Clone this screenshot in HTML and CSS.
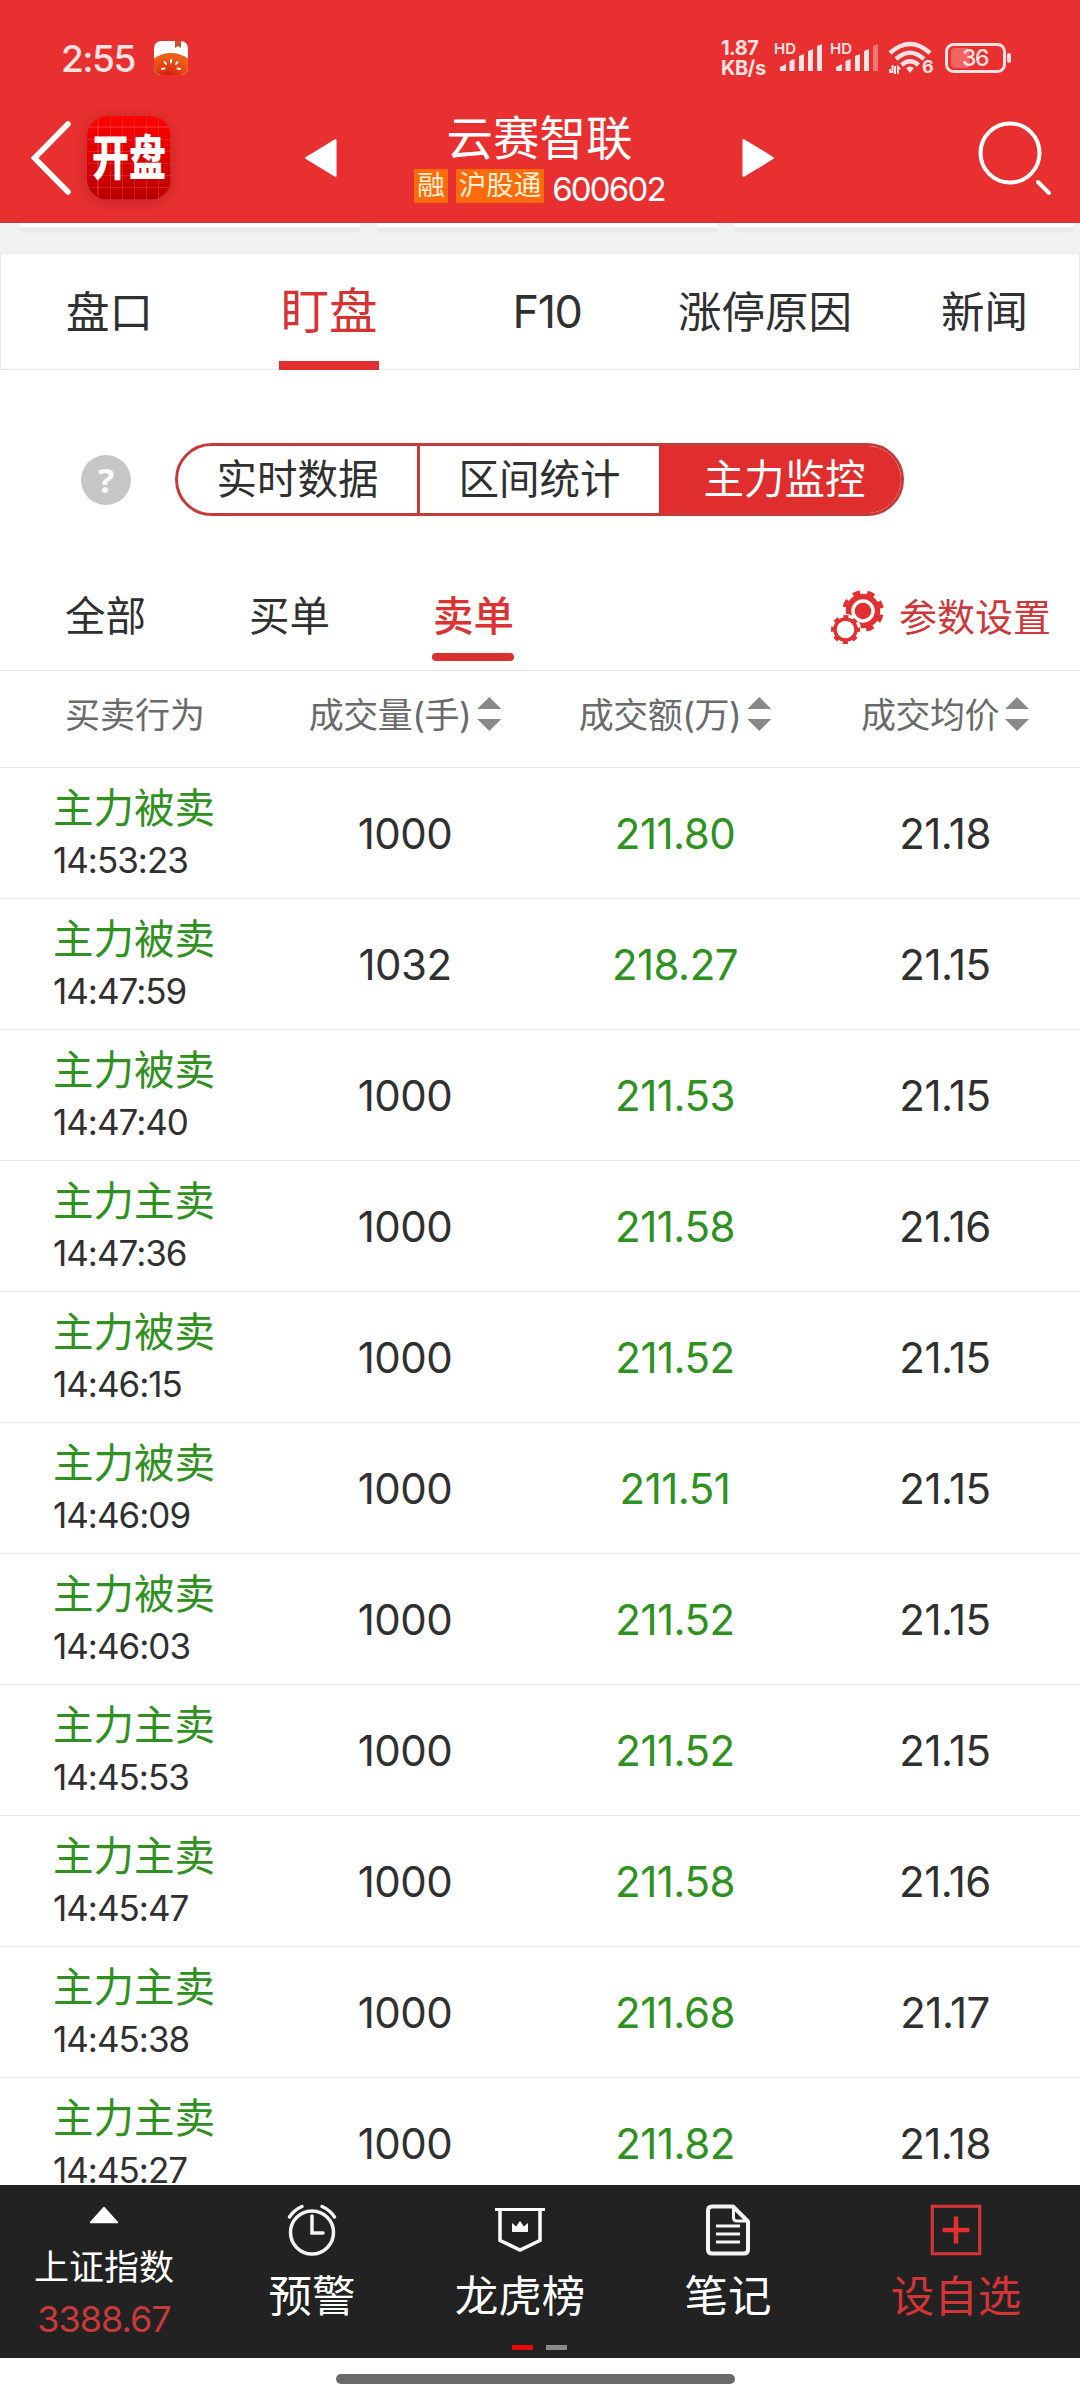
FILE: index.html
```html
<!DOCTYPE html>
<html lang="zh">
<head>
  <meta charset="UTF-8">
  <title>云赛智联 600602</title>
  <link rel="stylesheet" href="styles.css">
</head>
<body>
  <header>
    <div class="status-bar">
      <span class="time">2:55</span>
      <svg class="tomato" width="34" height="34" viewBox="0 0 34 34">
        <defs>
          <clipPath id="tomatoClip"><rect width="34" height="34" rx="7"/></clipPath>
          <radialGradient id="tomatoFill" cx="0.45" cy="0.6" r="0.5">
            <stop offset="0" stop-color="#d21a08"/>
            <stop offset="1" stop-color="#ee5f1c"/>
          </radialGradient>
        </defs>
        <g clip-path="url(#tomatoClip)">
          <rect width="34" height="34" fill="#fff"/>
          <path d="M21 0h6v7l-3-2-3 2z" fill="#c9532c"/>
          <ellipse cx="17" cy="31" rx="24" ry="19" fill="url(#tomatoFill)"/>
          <path d="M17 19v2.500M10.500 21l1.500 2M23.500 21l-1.500 2M8 28l2.500-.5M26 28l-2.500-.5" stroke="#fff" stroke-width="2" stroke-linecap="round"/>
        </g>
      </svg>
      <div class="net-speed"><span>1.87</span><span>KB/s</span></div>
      <svg class="signal" width="48" height="34" viewBox="0 0 48 34">
        <text x="-1" y="13">HD</text>
        <path d="M5 30v-4l6-3v7zM14.500 30V20l5-2v12zM24 30V15l5-2v17zM33 30V10l5-2v22zM42 30V5l5-2v27z"/>
      </svg>
      <svg class="signal second" width="48" height="34" viewBox="0 0 48 34">
        <text x="-1" y="13">HD</text>
        <path d="M5 30v-4l6-3v7zM14.500 30V20l5-2v12zM24 30V15l5-2v17zM33 30V10l5-2v22z"/>
        <path d="M42 30V5l5-2v27z" opacity="0.4"/>
      </svg>
      <svg class="wifi" width="46" height="36" viewBox="0 0 46 36">
        <g fill="none" stroke="#ffe3e3" stroke-width="4.500">
          <path d="M2 13Q22 -5 42 13"/>
          <path d="M8 19Q22 6.500 36 19"/>
          <path d="M13.500 25Q22 17.500 30.500 25"/>
        </g>
        <path d="M18 28q4-3 8 0l-4 5z" fill="#ffe3e3"/>
        <path d="M2 29v3h2.500v-7M7 34v-8M10 34v-7l2 2" fill="none" stroke="#ffe3e3" stroke-width="2"/>
        <text x="34" y="33">6</text>
      </svg>
      <svg class="battery" width="68" height="30" viewBox="0 0 68 30">
        <rect x="1.500" y="1.500" width="58" height="27" rx="7" fill="none" stroke="#ffe3e3" stroke-width="3"/>
        <rect x="6" y="5" width="19" height="20" rx="4" fill="#f06464"/>
        <rect x="62" y="10" width="4" height="10" rx="2" fill="#ffe3e3"/>
        <text x="17" y="23">36</text>
      </svg>
    </div>

    <div class="nav-bar">
      <div class="nav-left">
        <svg width="40" height="76" viewBox="0 0 40 76">
          <path d="M37 4L3.500 38L37 72" fill="none" stroke="#fff" stroke-width="5.500" stroke-linecap="round"/>
        </svg>
        <div class="brand"><span>开盘</span></div>
      </div>
      <svg class="arrow" width="33" height="40" viewBox="0 0 33 40">
        <path d="M2 20L31.500 2v36z" fill="#fff" stroke="#fff" stroke-width="2" stroke-linejoin="round"/>
      </svg>
      <div class="stock">
        <h1>云赛智联</h1>
        <div class="stock-info"><i>融</i><i>沪股通</i><span>600602</span></div>
      </div>
      <svg class="arrow" width="33" height="40" viewBox="0 0 33 40">
        <path d="M31 20L1.500 2v36z" fill="#fff" stroke="#fff" stroke-width="2" stroke-linejoin="round"/>
      </svg>
      <svg class="search" width="76" height="76" viewBox="0 0 76 76">
        <circle cx="33" cy="33" r="29.500" fill="none" stroke="#fff" stroke-width="4"/>
        <path d="M61 62l11 11" stroke="#fff" stroke-width="4" stroke-linecap="round"/>
      </svg>
    </div>
  </header>

  <div class="card-strip"><div></div><div></div><div></div></div>

  <nav class="tabs">
    <span>盘口</span>
    <span class="active">盯盘</span>
    <span>F10</span>
    <span>涨停原因</span>
    <span>新闻</span>
  </nav>

  <div class="mode-row">
    <div class="help">?</div>
    <div class="segmented">
      <span>实时数据</span>
      <span>区间统计</span>
      <span class="active">主力监控</span>
    </div>
  </div>

  <div class="filter-row">
    <span>全部</span>
    <span>买单</span>
    <span class="active">卖单</span>
    <div class="settings">
      <svg width="56" height="56" viewBox="0 0 56 56">
        <g fill="none" stroke="#e23030">
          <circle cx="33" cy="22" r="14.500" stroke-width="5.500"/>
          <circle cx="33" cy="22" r="18" stroke-width="5.500" stroke-dasharray="7.070 7.070" stroke-dashoffset="10.500"/>
        </g>
        <circle cx="33" cy="22" r="8.300" fill="#e23030"/>
        <circle cx="15.500" cy="40.500" r="15.500" fill="#fff"/>
        <g fill="none" stroke="#e23030">
          <circle cx="15.500" cy="40.500" r="10.500" stroke-width="3.500"/>
          <circle cx="15.500" cy="40.500" r="12.500" stroke-width="4" stroke-dasharray="4.900 4.918" stroke-dashoffset="2.450"/>
        </g>
      </svg>
      参数设置
    </div>
  </div>

  <div class="row table-head">
    <span>买卖行为</span>
    <span class="sortable">成交量(手)</span>
    <span class="sortable">成交额(万)</span>
    <span class="sortable">成交均价</span>
  </div>
  <main id="orderList"></main>

  <footer>
    <div class="index-item">
      <svg width="30" height="18" viewBox="0 0 30 18">
        <path d="M15 1.500L28.500 16.500H1.500z" fill="#fff" stroke="#fff" stroke-width="1.500" stroke-linejoin="round"/>
      </svg>
      <span>上证指数</span>
      <b>3388.67</b>
    </div>
    <div class="item">
      <svg width="52" height="52" viewBox="0 0 52 52" fill="none" stroke="#f4f4f4" stroke-width="3.500" stroke-linecap="round">
        <circle cx="26" cy="28.500" r="21.500"/>
        <path d="M26 12v17h11"/>
        <path d="M3.500 13Q8 6 16 2.500M48.500 13Q44 6 36 2.500"/>
      </svg>
      <span>预警</span>
    </div>
    <div class="item">
      <svg width="52" height="52" viewBox="0 0 52 52" fill="none" stroke="#fff">
        <path d="M1 5.500h50" stroke-width="3"/>
        <path d="M6 5.500v31l20 9.500l20-9.500v-31" stroke-width="3.500"/>
        <path d="M18 28v-9l4 3.500l4-5.500l4 5.500l4-3.500v9z" fill="#fff" stroke="none"/>
      </svg>
      <span>龙虎榜</span>
      <div class="pager"><i></i><i></i></div>
    </div>
    <div class="item">
      <svg width="52" height="52" viewBox="0 0 52 52" fill="none" stroke="#f4f4f4">
        <path d="M31 2.500H10Q6 2.500 6 6.500V45.500Q6 49.500 10 49.500H42Q46 49.500 46 45.500V17.500z" stroke-width="4" stroke-linejoin="round"/>
        <path d="M31.500 3v10.500q0 3.500 3.500 3.500h10" stroke-width="3"/>
        <path d="M14 22h24M14 30h24M14 38h24" stroke-width="2.800"/>
      </svg>
      <span>笔记</span>
    </div>
    <div class="item add">
      <svg width="52" height="52" viewBox="0 0 52 52" fill="none" stroke="#d23535">
        <rect x="2.300" y="2.300" width="47.400" height="47.400" stroke-width="3.200"/>
        <path d="M26 12.500v27M12.500 26h27" stroke="#e23030" stroke-width="4.500"/>
      </svg>
      <span>设自选</span>
    </div>
  </footer>
  <div class="home-bar"></div>

  <script>
    // 行为, 时间, 成交量, 成交额, 均价
    const orders = [
      ["主力被卖", "14:53:23", "1000", "211.80", "21.18"],
      ["主力被卖", "14:47:59", "1032", "218.27", "21.15"],
      ["主力被卖", "14:47:40", "1000", "211.53", "21.15"],
      ["主力主卖", "14:47:36", "1000", "211.58", "21.16"],
      ["主力被卖", "14:46:15", "1000", "211.52", "21.15"],
      ["主力被卖", "14:46:09", "1000", "211.51", "21.15"],
      ["主力被卖", "14:46:03", "1000", "211.52", "21.15"],
      ["主力主卖", "14:45:53", "1000", "211.52", "21.15"],
      ["主力主卖", "14:45:47", "1000", "211.58", "21.16"],
      ["主力主卖", "14:45:38", "1000", "211.68", "21.17"],
      ["主力主卖", "14:45:27", "1000", "211.82", "21.18"]
    ];

    const list = document.getElementById("orderList");
    orders.forEach(([action, time, volume, amount, price]) => {
      list.insertAdjacentHTML("beforeend", `
        <div class="row order">
          <div class="action"><b>${action}</b><span>${time}</span></div>
          <span>${volume}</span>
          <span class="green">${amount}</span>
          <span>${price}</span>
        </div>
      `);
    });
  </script>
</body>
</html>
```
FILE: styles.css
```css
* {
  box-sizing: border-box;
}

body {
  margin: 0;
  width: 1080px;
  height: 2400px;
  overflow: hidden;
  display: flex;
  flex-direction: column;
  background: #fff;
  color: #303030;
  font-family: Inter, "Noto Sans CJK SC", sans-serif;
}

i, b {
  font-style: normal;
  font-weight: normal;
}

svg {
  display: block;
  flex: none;
  overflow: visible;
}

header {
  height: 223px;
  flex: none;
  background: #e83030;
  border-bottom: 1px solid #c23a3a;
  color: #fff;
}

/* 状态栏 */
.status-bar {
  height: 92px;
  padding: 24px 67px 0 61px;
  display: flex;
  align-items: center;
  color: #ffe3e3;
}

.time {
  width: 93px;
  font-size: 37px;
  font-weight: 500;
  letter-spacing: -1.500px;
}

.net-speed {
  width: 54px;
  margin-left: auto;
  display: flex;
  flex-direction: column;
  font-size: 20px;
  line-height: 20px;
  font-weight: 700;
  letter-spacing: -0.500px;
}

.status-bar text {
  fill: #ffe3e3;
  font-weight: 600;
  font-size: 15px;
}

.signal {
  fill: #ffe3e3;
}

.second {
  margin-left: 8px;
}

.wifi {
  margin-left: 9px;
}

.wifi text {
  font-size: 18px;
  font-weight: 700;
}

.battery {
  margin-left: 11px;
}

.battery text {
  font-size: 23px;
  font-weight: 500;
  letter-spacing: -1.500px;
}

/* 标题栏 */
.nav-bar {
  height: 131px;
  display: grid;
  grid-template-columns: 304px 33px 405px 33px 305px;
  align-items: center;
}

.nav-left {
  display: flex;
  align-items: center;
  gap: 16px;
  padding-left: 31px;
}

.brand {
  width: 84px;
  height: 84px;
  display: flex;
  align-items: center;
  justify-content: center;
  border-radius: 21px;
  background:
    repeating-linear-gradient(90deg, transparent 0 10.500px, rgba(255, 120, 120, 0.25) 10.500px 12px),
    repeating-linear-gradient(transparent 0 10.500px, rgba(255, 120, 120, 0.25) 10.500px 12px),
    linear-gradient(#ff0000, #b80000);
  box-shadow: 0 2px 14px rgba(120, 20, 20, 0.35);
}

.brand span {
  font-size: 37px;
  font-weight: 900;
  line-height: 40px;
  transform: scaleY(1.28);
}

.stock {
  text-align: center;
}

.stock h1 {
  margin: -3px 0 0;
  font-size: 46.500px;
  line-height: 60px;
  font-weight: 400;
}

.stock-info {
  height: 36px;
  display: flex;
  justify-content: center;
  align-items: center;
  gap: 8px;
}

.stock-info i {
  height: 34px;
  padding: 0 3px;
  background: #ff6a0a;
  color: #fff3d6;
  font-size: 27.500px;
  line-height: 33px;
}

.stock-info span {
  font-size: 33px;
  letter-spacing: -1.800px;
  padding-top: 5px;
}

.search {
  justify-self: end;
  margin-right: 27px;
}

.card-strip {
  height: 30px;
  flex: none;
  display: flex;
  gap: 17px;
  padding: 0 6px 0 20px;
  background: #f2f2f2;
}

.card-strip div {
  flex: 1;
  height: 4px;
  background: #fff;
  box-shadow: 0 5px 3px #e6e6e6;
}

/* 主标签 */
.tabs {
  height: 117px;
  flex: none;
  display: grid;
  grid-template-columns: 217px 222px 214px 222px 1fr;
  border: 1px solid #e8e8e8;
  font-size: 43.500px;
  line-height: 116px;
  text-align: center;
}

.tabs span:nth-child(3) {
  font-size: 45px;
  letter-spacing: -1.500px;
}

.tabs span:last-child {
  padding-left: 14px;
}

.tabs .active {
  justify-self: center;
  width: 100px;
  height: 116px;
  border-bottom: 9px solid #e23030;
  color: #d83232;
  font-size: 48.500px;
}

.mode-row {
  height: 219px;
  flex: none;
  display: flex;
  align-items: center;
  padding-left: 81px;
}

.help {
  width: 50px;
  height: 50px;
  margin-right: 44px;
  border-radius: 50%;
  background: #c6c6c6;
  color: #fff;
  font: 700 34px/50px "Open Sans", sans-serif;
  text-align: center;
}

.segmented {
  width: 729px;
  height: 73px;
  display: grid;
  grid-template-columns: 239px 242px 245px;
  border: 3px solid #c63a3a;
  border-radius: 37px;
  overflow: hidden;
  font-size: 40.500px;
  line-height: 67px;
  text-align: center;
}

.segmented span + span {
  border-left: 3px solid #c63a3a;
}

.segmented .active {
  background: #e02e2e;
  color: #fff;
  margin: -3px -3px -3px 0;
  border-color: #e02e2e;
  line-height: 73px;
}

.filter-row {
  height: 82px;
  flex: none;
  display: flex;
  align-items: flex-start;
  padding: 0 29px 0 65px;
  border-bottom: 1px solid #e6e6e6;
  font-size: 40.500px;
  line-height: 56px;
}

.filter-row > span {
  width: 82px;
  height: 72px;
  margin-right: 102px;
}

.filter-row > .active {
  color: #dc3232;
  font-weight: 500;
}

.filter-row > .active::after {
  content: "";
  display: block;
  height: 8px;
  margin: 8px 1px 0 -1px;
  border-radius: 4px;
  background: #dc3030;
}

.settings {
  margin-left: auto;
  display: flex;
  align-items: center;
  gap: 13px;
  color: #cd3838;
  font-size: 38px;
}

/* 列表 */
.row {
  display: grid;
  grid-template-columns: repeat(4, 270px);
  align-items: center;
  text-align: center;
  border-bottom: 1px solid #e8e8e8;
}

.table-head {
  height: 97px;
  flex: none;
  padding-bottom: 14px;
  color: #6a6a6a;
  font-size: 35px;
}

.sortable {
  display: flex;
  align-items: center;
  justify-content: center;
  gap: 6px;
  letter-spacing: -0.500px;
}

.sortable::after {
  content: "";
  width: 24px;
  height: 34px;
  margin-top: 4px;
  background: #888;
  clip-path: polygon(50% 0, 100% 35%, 0 35%, 0 65%, 100% 65%, 50% 100%, 0 65%, 0 35%);
}

main {
  flex: 1;
  min-height: 0;
  overflow: hidden;
}

.order {
  height: 131px;
  font-size: 42px;
  letter-spacing: -0.500px;
}

.action {
  display: flex;
  flex-direction: column;
  padding-left: 53px;
  text-align: left;
}

.action b {
  color: #2e9120;
  font-size: 40.500px;
  line-height: 54px;
  letter-spacing: 0;
}

.action span {
  font-size: 35px;
  line-height: 48px;
  letter-spacing: -1px;
}

.green {
  color: #2e9120;
}

/* 底部栏 */
footer {
  height: 173px;
  flex: none;
  display: grid;
  grid-template-columns: 208px 208px 208px 208px 248px;
  background: #222;
  color: #fff;
}

footer > div {
  display: flex;
  flex-direction: column;
  align-items: center;
}

.index-item {
  padding-top: 21px;
}

.index-item span {
  margin-top: 17px;
  font-size: 35px;
  line-height: 52px;
}

.index-item b {
  color: #c63a3a;
  font-size: 36px;
  line-height: 52px;
  letter-spacing: -1px;
}

.item {
  position: relative;
  padding-top: 19px;
  font-size: 43.500px;
  line-height: 60px;
}

.item span {
  margin-top: 10px;
}

.add {
  color: #d23535;
}

.pager {
  position: absolute;
  top: 160px;
  left: 96px;
  display: flex;
  gap: 13px;
}

.pager i {
  width: 21px;
  height: 5px;
  background: #e80808;
}

.pager i + i {
  background: #8a8a8a;
}

.home-bar {
  width: 399px;
  height: 10px;
  flex: none;
  margin: 16px 0 16px 336px;
  border-radius: 5px;
  background: #6a6a6a;
}
```
